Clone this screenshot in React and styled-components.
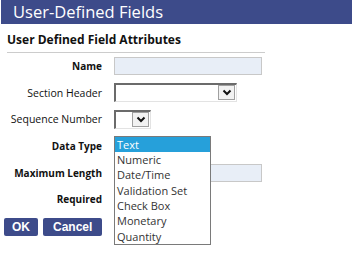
import React from 'react';
import styled, { createGlobalStyle } from 'styled-components';

const GlobalStyle = createGlobalStyle`
  body {
    margin: 0;
    background: #ffffff;
    font-family: 'Open Sans', 'Noto Sans', sans-serif;
    color: #222;
  }
`;

const TYPES = ['Text', 'Numeric', 'Date/Time', 'Validation Set', 'Check Box', 'Monetary', 'Quantity'];

function Chevron() {
  return (
    <svg width='10' height='7' viewBox='0 0 10 7'>
      <path d='M1.5 1.5 L5 5 L8.5 1.5' fill='none' stroke='#111' strokeWidth='2' />
    </svg>
  );
}

export default function App() {
  return (
    <>
      <GlobalStyle />
      <Page>
        <TitleBar>User-Defined Fields</TitleBar>
        <Section>
          <Subtitle>User Defined Field Attributes</Subtitle>
          <Form>
            <Label bold>Name</Label>
            <TextInput width={148} />

            <Label>Section Header</Label>
            <Select width={123}>
              <ArrowBox><Chevron /></ArrowBox>
            </Select>

            <Label>Sequence Number</Label>
            <Select width={37}>
              <ArrowBox><Chevron /></ArrowBox>
            </Select>

            <Label bold>Data Type</Label>
            <DropCell>
              <ListBox>
                {TYPES.map((t, i) => (
                  <Option key={t} active={i === 0}>{t}</Option>
                ))}
              </ListBox>
            </DropCell>

            <Label bold>Maximum Length</Label>
            <TextInput width={148} />

            <Label bold>Required</Label>
            <div />
          </Form>
          <Buttons>
            <Button>OK</Button>
            <Button>Cancel</Button>
          </Buttons>
        </Section>
      </Page>
    </>
  );
}

const Page = styled.div`
  width: 352px;
  height: 260px;
  overflow: hidden;
`;
const TitleBar = styled.div`
  margin-left: 1px;
  height: 24px;
  background: #3d4b8a;
  color: #fff;
  font-size: 16.5px;
  line-height: 24px;
  padding-left: 12px;
`;
const Section = styled.div`
  padding: 0 0 0 4px;
`;
const Subtitle = styled.div`
  margin: 7px 0 0 3px;
  width: 258px;
  font-size: 12px;
  font-weight: 700;
  line-height: 18px;
  padding-bottom: 3px;
  border-bottom: 1px solid #cccccc;
  color: #111;
`;
const Form = styled.div`
  display: grid;
  grid-template-columns: 98px 1fr;
  column-gap: 12px;
  grid-auto-rows: 26.6px;
  align-items: center;
`;
const Label = styled.div`
  text-align: right;
  font-size: ${p => (p.bold ? 10 : 10.5)}px;
  font-weight: ${p => (p.bold ? 700 : 400)};
  color: #111;
  white-space: nowrap;
`;
const TextInput = styled.div`
  width: ${p => p.width}px;
  height: 18px;
  box-sizing: border-box;
  background: #e8eef7;
  border: 1px solid #c8c8c8;
`;
const Select = styled.div`
  width: ${p => p.width}px;
  height: 19px;
  box-sizing: border-box;
  background: #fff;
  border-top: 2px solid #6b6b6b;
  border-left: 2px solid #6b6b6b;
  border-right: 1px solid #e3e3e3;
  border-bottom: 1px solid #e3e3e3;
  display: flex;
  justify-content: flex-end;
  padding: 0 1px 1px 0;
`;
const ArrowBox = styled.div`
  width: 17px;
  height: 100%;
  box-sizing: border-box;
  border: 1px solid #a0a0a0;
  background: #f2f2f2;
  display: flex;
  align-items: center;
  justify-content: center;
`;
const DropCell = styled.div`
  position: relative;
  height: 100%;
`;
const ListBox = styled.div`
  position: absolute;
  top: 3px;
  left: 0;
  z-index: 2;
  width: 97px;
  box-sizing: border-box;
  border: 1px solid #7a7a7a;
  background: #fff;
`;
const Option = styled.div`
  height: 15.3px;
  line-height: 15px;
  padding-left: 2px;
  font-size: 11px;
  color: ${p => (p.active ? '#fff' : '#333')};
  background: ${p => (p.active ? '#26a0da' : 'transparent')};
  white-space: nowrap;
`;
const Buttons = styled.div`
  display: flex;
  gap: 5px;
  margin-top: 5px;
`;
const Button = styled.div`
  height: 18px;
  padding: 0 8px;
  border-radius: 2px;
  background: #3d4b8a;
  color: #fff;
  font-family: 'Liberation Sans', Arial, sans-serif;
  font-size: 12px;
  font-weight: 700;
  line-height: 18px;
  &:last-child {
    padding: 0 10px;
  }
`;
